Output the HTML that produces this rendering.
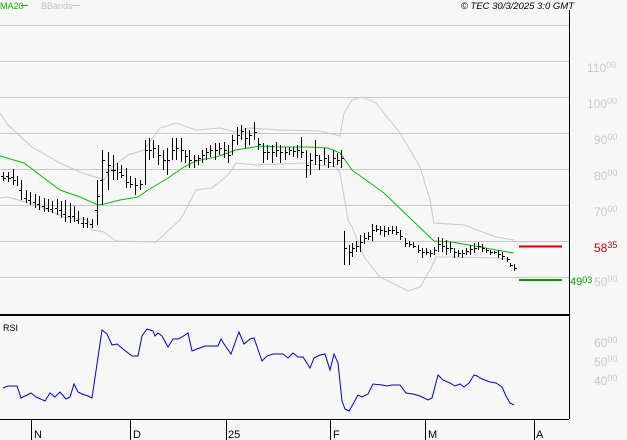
<!DOCTYPE html>
<html><head><meta charset="utf-8"><style>
html,body{margin:0;padding:0;background:#f7f7f7;}
body{width:627px;height:440px;overflow:hidden;position:relative;font-family:"Liberation Sans",sans-serif;}
svg{position:absolute;left:0;top:0;}
</style></head><body>
<svg width="627" height="440" viewBox="0 0 627 440" xmlns="http://www.w3.org/2000/svg">
<rect width="627" height="440" fill="#f7f7f7"/>
<g stroke="#c8c8c8" stroke-width="1">
<line x1="0" y1="25.5" x2="569" y2="25.5"/>
<line x1="0" y1="61.5" x2="569" y2="61.5"/>
<line x1="0" y1="97.5" x2="569" y2="97.5"/>
<line x1="0" y1="133.5" x2="569" y2="133.5"/>
<line x1="0" y1="169.5" x2="569" y2="169.5"/>
<line x1="0" y1="205.5" x2="569" y2="205.5"/>
<line x1="0" y1="241.5" x2="569" y2="241.5"/>
<line x1="0" y1="277.5" x2="569" y2="277.5"/>
</g>
<g fill="none" stroke="#c8c8c8" stroke-width="1">
<polyline points="0,113 8,125 32,147 60,163 80,172 104,180 112,167 128,155 144,150 160,128 176,123 196,130 220,128 236,132 248,128 280,130 320,131 340,136 344,113 352,100 362,97 376,103 400,133 420,167 430,200 434,223 464,225 496,237 514,240"/>
<polyline points="0,198 8,197 36,205 64,217 88,220 92,230 104,232 116,241 156,242 172,227 180,220 184,213 196,190 212,188 228,175 236,163 256,165 304,163 336,167 340,173 348,220 352,227 364,257 380,277 408,291 420,287 430,270 436,257 452,257 496,258 508,259"/>
</g>
<polyline fill="none" stroke="#00c000" stroke-width="1" points="0,156 24,163 60,190 80,197 98,205 104,204 120,200 138,197 148,190 168,178 184,167 196,161 216,157 236,150 260,146 280,147 308,147 328,148 340,153 352,170 384,193 412,220 434,241 452,242 480,247 496,250 514,253"/>
<path fill="none" stroke="#000" stroke-width="1" d="
M3.5 172V181M8.5 172V182M13.5 169V185M17.5 176V186M21.5 180V200M26.5 190V203M30.5 192V205M35.5 194V208M39.5 196V210M44.5 198V212M48.5 199V212M52.5 201V213M57.5 199V215M61.5 201V218M65.5 200V222M70.5 203V223M74.5 206V222M78.5 211V224M83.5 217V228M87.5 218V228M92.5 219V228
M97.5 180V225M102.5 150V205M108.5 152V190M113.5 155V180M117.5 163V180M121.5 165V178M126.5 168V188M130.5 176V188M135.5 178V195M140.5 180V190M145.5 140V185M149.5 138V160M153.5 140V158M158.5 145V165M163.5 150V170M167.5 148V175M172.5 138V160M176.5 138V160M181.5 138V162M185.5 150V163M189.5 150V168M194.5 155V168M198.5 155V165M202.5 150V163M206.5 148V160M210.5 145V157M215.5 143V160M219.5 143V155M224.5 142V158M228.5 145V163M232.5 135V155M237.5 127V145M241.5 125V140M245.5 128V148M249.5 130V145M254.5 122V140M258.5 138V150M263.5 143V163M267.5 145V160M272.5 145V163M276.5 142V157M280.5 145V163M285.5 147V160M289.5 147V155M293.5 147V157M297.5 145V158M301.5 137V158M306.5 150V178M310.5 153V175M315.5 140V165M319.5 155V170M324.5 148V165M328.5 155V168M333.5 150V167M337.5 153V165M341.5 150V168
M344.5 231V265M349.5 245V265M352.5 243V257M356.5 241V252M360.5 235V252M364.5 233V244M368.5 232V240M372.5 224V241M376.5 225V232M380.5 226V235M384.5 226V237M388.5 227V235M392.5 226V234M396.5 226V235M400.5 230V240M405.5 238V247M409.5 241V247M413.5 242V248M418.5 245V253M422.5 248V258M426.5 248V255M430.5 250V257M434.5 247V255M438.5 237V252M442.5 238V252M446.5 240V255M450.5 242V253M454.5 248V258M458.5 250V257M462.5 250V258M466.5 248V255M470.5 245V255M474.5 243V253M478.5 242V250M482.5 244V252M486.5 248V253M490.5 250V255M494.5 251V254M498.5 250V258M502.5 252V260M507.5 257V262M510.5 263V267M514.5 264V271"/>
<g fill="none" stroke="#000" stroke-width="1" d="">
<path d="M1 176.5h2M4 178.5h2M6 176.5h2M9 178.5h2M11 177.5h2M14 180.5h2M19 190.5h2M24 198.5h2M28 200.5h2M33 202.5h2M37 204.5h2M42 206.5h2M46 208.5h2M50 209.5h2M55 208.5h2M59 210.5h2M63 214.5h2M68 216.5h2M72 216.5h2M76 220.5h2M81 223.5h2M85 223.5h2M90 224.5h2M95 210.5h2M98 196.5h2M100 180.5h2M103 160.5h2M106 172.5h2M109 165.5h2M111 170.5h2M114 170.5h2M119 172.5h2M122 175.5h2M127 182.5h2M131 184.5h2M136 185.5h2M141 184.5h2M146 150.5h2M150 150.5h2M154 148.5h2M159 155.5h2M164 160.5h2M168 160.5h2M173 150.5h2M177 148.5h2M182 150.5h2M186 156.5h2M190 160.5h2M195 160.5h2M199 158.5h2M203 155.5h2M207 152.5h2M211 150.5h2M216 150.5h2M220 148.5h2M225 150.5h2M229 155.5h2M233 140.5h2M238 135.5h2M242 131.5h2M246 138.5h2M250 135.5h2M255 132.5h2M259 144.5h2M264 152.5h2M268 152.5h2M273 152.5h2M277 150.5h2M281 152.5h2M286 152.5h2M290 150.5h2M294 151.5h2M298 150.5h2M302 152.5h2M307 165.5h2M311 160.5h2M316 155.5h2M320 160.5h2M325 158.5h2M329 162.5h2M334 158.5h2M338 160.5h2M342 158.5h2M345 248.5h2M350 252.5h2M353 248.5h2M357 246.5h2M361 242.5h2M365 238.5h2M369 236.5h2M373 230.5h2M377 229.5h2M381 230.5h2M385 231.5h2M389 230.5h2M393 230.5h2M397 232.5h2M401 236.5h2M406 243.5h2M410 244.5h2M414 246.5h2M419 250.5h2M423 252.5h2M427 252.5h2M431 253.5h2M435 250.5h2M439 244.5h2M443 246.5h2M447 248.5h2M451 248.5h2M455 252.5h2M459 253.5h2M463 253.5h2M467 251.5h2M471 249.5h2M475 248.5h2M479 246.5h2M483 248.5h2M487 250.5h2M491 252.5h2M495 252.5h2M499 254.5h2M503 256.5h2M508 259.5h2M511 265.5h2M515 268.5h2"/>
</g>
<line x1="519" y1="246.5" x2="562" y2="246.5" stroke="#cc0000" stroke-width="2"/>
<line x1="519" y1="280" x2="562" y2="280" stroke="#009900" stroke-width="2"/>
<line x1="569.5" y1="10" x2="569.5" y2="419" stroke="#000" stroke-width="1"/>
<line x1="0" y1="315" x2="569" y2="315" stroke="#000" stroke-width="2"/>
<line x1="0" y1="419.5" x2="569" y2="419.5" stroke="#000" stroke-width="1"/>
<g stroke="#000" stroke-width="1">
<line x1="31.5" y1="419" x2="31.5" y2="440"/>
<line x1="130.5" y1="419" x2="130.5" y2="440"/>
<line x1="226.5" y1="419" x2="226.5" y2="440"/>
<line x1="330.5" y1="419" x2="330.5" y2="440"/>
<line x1="425.5" y1="419" x2="425.5" y2="440"/>
<line x1="534.5" y1="419" x2="534.5" y2="440"/>
</g>
<polyline fill="none" stroke="#0000cc" stroke-width="1" points="3,388 8,386 17,386 21,398 31,393 36,397 45,401 50,393 55,397 60,392 66,399 70,397 74,384 78,392 82,394 88,396 92,398 102,330 107,334 112,345 117,344 123,349 132,356 138,356 142,336 147,329 153,331 155,336 158,333 162,336 168,347 173,339 178,339 182,337 188,333 192,351 197,349 205,346 213,346 218,346 221,339 224,344 231,354 236,340 239,332 244,344 250,339 254,338 262,361 267,356 273,354 283,354 288,358 293,353 298,357 303,357 310,368 314,358 320,355 325,354 330,370 334,354 338,363 342,401 345,409 349,411 352,406 358,395 362,397 368,394 373,384 382,385 387,386 392,385 400,385 406,393 413,394 420,396 428,400 432,398 438,375 443,380 450,383 455,386 460,384 464,387 469,383 474,375 477,376 482,379 490,382 496,383 502,387 506,396 510,403 514,405"/>
<g font-family="Liberation Sans, sans-serif">
<text x="0" y="9" font-size="9" fill="#00bb00">MA20</text>
<line x1="21" y1="5.5" x2="28" y2="5.5" stroke="#00bb00"/>
<text x="41" y="9" font-size="9" fill="#c0c0c0">BBands</text>
<line x1="72" y1="5.5" x2="80" y2="5.5" stroke="#c0c0c0"/>
<text x="574" y="9" font-size="9.5" font-style="italic" fill="#000" text-anchor="end">© TEC 30/3/2025 3:0 GMT</text>
<text x="3" y="331" font-size="9" fill="#000">RSI</text>
<g font-size="12" fill="#c8c8c8">
<text x="587" y="72">110<tspan font-size="9" dy="-4">00</tspan></text>
<text x="587" y="108">100<tspan font-size="9" dy="-4">00</tspan></text>
<text x="594" y="144">90<tspan font-size="9" dy="-4">00</tspan></text>
<text x="594" y="180">80<tspan font-size="9" dy="-4">00</tspan></text>
<text x="594" y="216">70<tspan font-size="9" dy="-4">00</tspan></text>
<text x="594" y="286">50<tspan font-size="9" dy="-4">00</tspan></text>
<text x="594" y="347">60<tspan font-size="9" dy="-4">00</tspan></text>
<text x="594" y="366">50<tspan font-size="9" dy="-4">00</tspan></text>
<text x="594" y="385">40<tspan font-size="9" dy="-4">00</tspan></text>
</g>
<text x="594" y="252" font-size="12" fill="#cc0000">58<tspan font-size="9" dy="-4">35</tspan></text>
<text x="570" y="285" font-size="11" fill="#009900">49<tspan font-size="9" dy="-2">03</tspan></text>
<g font-size="11" fill="#000">
<text x="34" y="438">N</text>
<text x="133" y="438">D</text>
<text x="228" y="438">25</text>
<text x="333" y="438">F</text>
<text x="428" y="438">M</text>
<text x="536" y="438">A</text>
</g>
</g>
</svg>
</body></html>
